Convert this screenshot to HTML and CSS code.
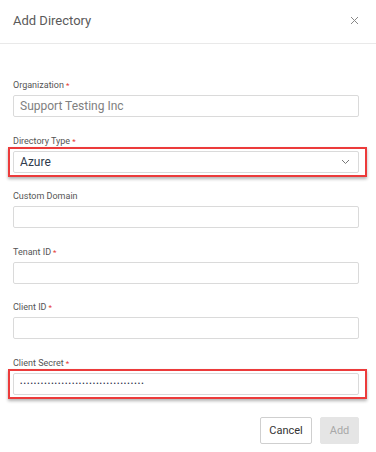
FILE: index.html
```html
<!DOCTYPE html>
<html lang="en">
<head>
  <meta charset="UTF-8" />
  <meta name="viewport" content="width=device-width, initial-scale=1.0"/>
  <title>Add Directory</title>
  <link rel="stylesheet" href="styles.css">
</head>
<body>
  <div class="modal">
    <div class="modal-header">
      <h2 class="modal-title">Add Directory</h2>
      <button class="close" aria-label="Close">
        <svg width="9" height="9" viewBox="0 0 9 9"><path d="M1 1L8 8M8 1L1 8" stroke="#888" stroke-width="1" fill="none"/></svg>
      </button>
    </div>

    <form class="modal-body">
      <div class="field">
        <label>Organization<span class="req">*</span></label>
        <input type="text" class="input muted" value="Support Testing Inc" />
      </div>

      <div class="field">
        <label>Directory Type<span class="req">*</span></label>
        <div class="highlight">
          <div class="select">
            <span>Azure</span>
            <svg width="9" height="6" viewBox="0 0 9 6"><path d="M1 1L4.5 4.5L8 1" stroke="#777" stroke-width="1" fill="none"/></svg>
          </div>
        </div>
      </div>

      <div class="field">
        <label>Custom Domain</label>
        <input type="text" class="input" />
      </div>

      <div class="field">
        <label>Tenant ID<span class="req">*</span></label>
        <input type="text" class="input" />
      </div>

      <div class="field">
        <label>Client ID<span class="req">*</span></label>
        <input type="text" class="input" />
      </div>

      <div class="field">
        <label>Client Secret<span class="req">*</span></label>
        <div class="highlight secret">
          <input type="password" class="input dots" value="xxxxxxxxxxxxxxxxxxxxxxxxxxxxxxxxxxxx" />
        </div>
      </div>

      <div class="actions">
        <button type="button" class="btn cancel">Cancel</button>
        <button type="button" class="btn add" disabled>Add</button>
      </div>
    </form>
  </div>
</body>
</html>
```

FILE: styles.css
```css
* {
  box-sizing: border-box;
}
body {
  margin: 0;
  background: #fff;
  font-family: Roboto, 'Liberation Sans', sans-serif;
}
.modal {
  width: 376px;
  height: 452px;
  background: #fff;
}
.modal-header {
  height: 44px;
  display: flex;
  align-items: center;
  justify-content: space-between;
  padding: 0 17px 2px 13px;
  border-bottom: 1px solid #e9e9e9;
}
.modal-title {
  margin: 0;
  font-size: 13px;
  font-weight: 400;
  color: #5a5a5a;
}
.close {
  border: none;
  background: none;
  padding: 0;
  width: 9px;
  height: 9px;
  display: flex;
  cursor: pointer;
}
.modal-body {
  padding: 35px 17px 0 13px;
}
.field {
  margin-bottom: 17.6px;
}
.field label {
  display: block;
  height: 12px;
  line-height: 12px;
  font-size: 9px;
  color: #555;
  margin-bottom: 4px;
}
.req {
  color: #e53935;
  margin-left: 2px;
  font-size: 8px;
}
.input,
.select {
  display: block;
  width: 100%;
  height: 22px;
  border: 1px solid #dadada;
  border-radius: 2px;
  background: #fff;
  padding: 0 6px;
  font-family: Roboto, 'Liberation Sans', sans-serif;
  font-size: 12px;
  color: #333;
  outline: none;
}
.input.muted {
  color: #808080;
}
.select {
  display: flex;
  align-items: center;
  justify-content: space-between;
  padding: 0 6px 0 6px;
  color: #2f3b4c;
}
.select svg {
  margin-right: 2px;
}
.highlight {
  margin: -4px -8px -4px -5px;
  padding: 2px 6px 2px 3px;
  border: 2px solid #ec3b3b;
  box-shadow: 0 2px 3px rgba(0, 0, 0, 0.3);
}
.input.dots {
  font-size: 7px;
  color: #1d2a44;
  letter-spacing: 1.1px;
}
.actions {
  display: flex;
  justify-content: flex-end;
  gap: 8px;
  padding-top: 4px;
}
.btn {
  height: 27px;
  border-radius: 2px;
  font-family: Roboto, 'Liberation Sans', sans-serif;
  font-size: 11px;
  padding: 0;
}
.cancel {
  width: 52px;
  background: #fff;
  border: 1px solid #cfcfcf;
  color: #333;
}
.add {
  width: 39px;
  background: #e5e5e5;
  border: 1px solid #e5e5e5;
  color: #a8a8a8;
}
```
